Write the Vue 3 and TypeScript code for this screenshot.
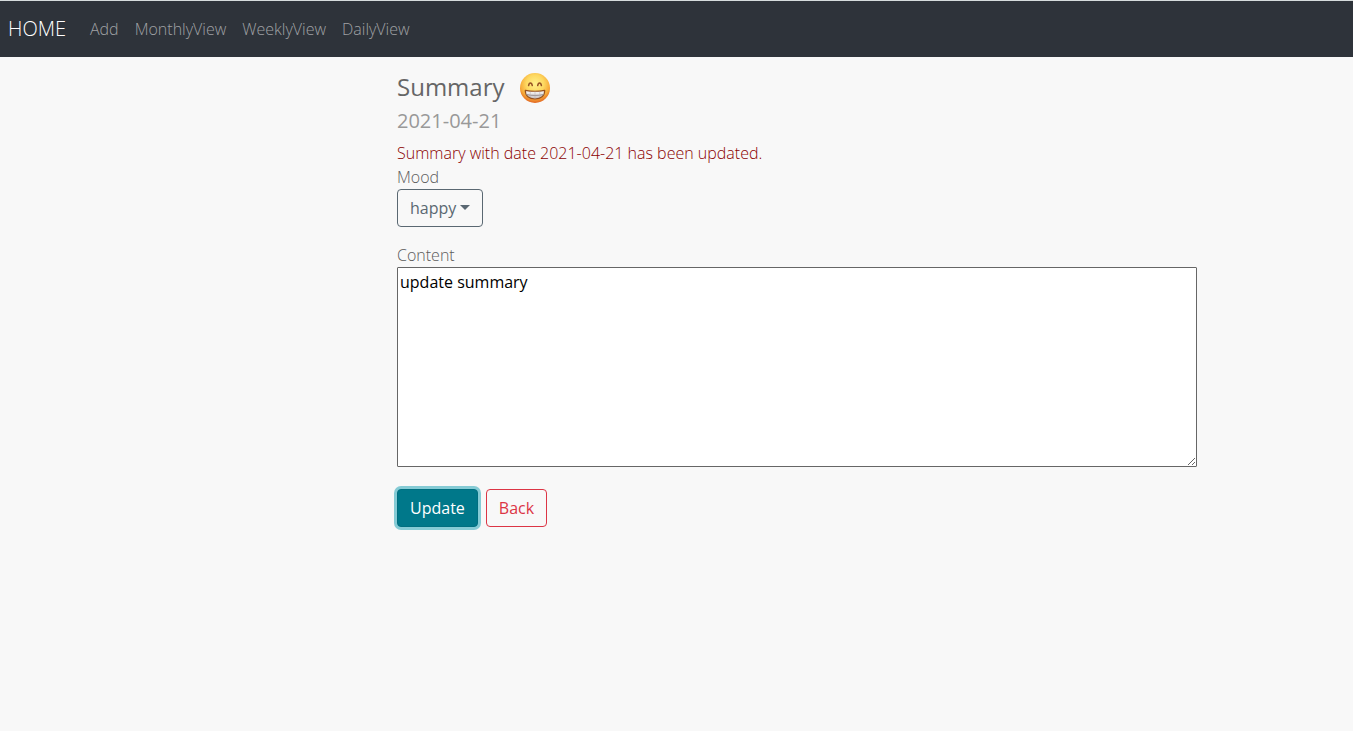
<script setup lang="ts">
import { ref } from 'vue'

const links: string[] = ['Add', 'MonthlyView', 'WeeklyView', 'DailyView']
const moods: string[] = ['happy']
const mood = ref('happy')
const content = ref('update summary')
const date = '2021-04-21'
</script>

<template>
  <nav class="navbar">
    <a class="brand" href="#">HOME</a>
    <a v-for="link in links" :key="link" class="nav-link" href="#">{{ link }}</a>
  </nav>
  <main class="page">
    <form class="summary" @submit.prevent>
      <div class="heading">
        <h4>Summary</h4>
        <svg class="emoji" viewBox="0 0 32 32" role="img" aria-label="happy face">
          <defs>
            <radialGradient id="face" cx="50%" cy="36%" r="65%">
              <stop offset="0" stop-color="#fff08a" />
              <stop offset="0.45" stop-color="#fdd860" />
              <stop offset="0.75" stop-color="#f7ab3a" />
              <stop offset="1" stop-color="#e0601f" />
            </radialGradient>
            <linearGradient id="teeth" x1="0" y1="0" x2="0" y2="1">
              <stop offset="0" stop-color="#ffffff" />
              <stop offset="1" stop-color="#c4bebe" />
            </linearGradient>
          </defs>
          <circle cx="16" cy="16" r="15" fill="url(#face)" />
          <path d="M9.6 13.6C10.2 10.2 12.6 10.2 13.3 13.6M18.7 13.6C19.4 10.2 21.8 10.2 22.4 13.6" fill="none" stroke="#965124" stroke-width="1.5" stroke-linecap="round" />
          <path d="M6.3 18.4C12 19.4 20 19.4 25.7 18.4C26 23.8 21.7 27 16 27S6 23.8 6.3 18.4Z" fill="url(#teeth)" stroke="#96501f" stroke-width="1.2" stroke-linejoin="round" />
          <path d="M7 22.5C12 23.7 20 23.7 25 22.5" fill="none" stroke="#8d8585" stroke-width="0.9" />
          <path d="M11.3 19.4V25.3M16 19.6V26.4M20.7 19.4V25.3" fill="none" stroke="#b5afaf" stroke-width="0.5" />
        </svg>
      </div>
      <h5>{{ date }}</h5>
      <p class="message" role="status">Summary with date {{ date }} has been updated.</p>
      <label for="mood">Mood</label>
      <div class="mood">
        <select id="mood" v-model="mood">
          <option v-for="m in moods" :key="m">{{ m }}</option>
        </select>
        <span class="caret" aria-hidden="true"></span>
      </div>
      <label for="content">Content</label>
      <textarea id="content" v-model="content"></textarea>
      <div class="actions">
        <button class="btn update" type="submit">Update</button>
        <button class="btn back" type="button">Back</button>
      </div>
    </form>
  </main>
</template>

<style>
body {
  background: #f8f8f8;
}
</style>

<style scoped>
.navbar,
.page {
  font-family: "Open Sans", sans-serif;
  font-size: 16px;
  font-weight: 300;
  line-height: 24px;
}
.navbar {
  display: flex;
  align-items: center;
  height: 56px;
  padding: 0 8px;
  border-top: 1px solid #d6dcdc;
  background: #2e333a;
}
.navbar a {
  text-decoration: none;
}
.brand {
  margin-right: 16px;
  color: #fff;
  font-size: 20px;
}
.nav-link {
  padding: 8px;
  color: #a0a2a5;
}
.page {
  display: grid;
  grid-template-columns: 397fr 800fr 156fr;
  padding: 15px 0 24px;
  color: #5c5c5c;
}
.summary {
  display: flex;
  flex-direction: column;
  grid-column: 2;
}
.heading {
  display: flex;
  align-items: flex-start;
  gap: 15px;
  margin-bottom: 5px;
}
h4,
h5,
p {
  margin: 0;
}
h4 {
  color: #666;
  font-size: 24px;
  font-weight: 500;
  line-height: 30px;
}
.emoji {
  width: 32px;
  height: 32px;
}
h5 {
  margin-bottom: 8px;
  color: #999;
  font-size: 20px;
  font-weight: 500;
  line-height: 24px;
}
.message {
  color: #8b0000;
}
.mood {
  display: grid;
  align-items: center;
  width: 86px;
  margin-bottom: 16px;
}
select,
.caret {
  grid-area: 1 / 1;
}
select {
  appearance: none;
  box-sizing: border-box;
  width: 100%;
  height: 38px;
  padding: 0 12px;
  border: 1px solid #5a6872;
  border-radius: 4px;
  background: transparent;
  color: #5a6872;
  font: 500 16px/24px "Open Sans", sans-serif;
}
.caret {
  justify-self: end;
  margin: 0 13px 2px 0;
  border: 5px solid transparent;
  border-top-color: #5a6872;
  border-bottom: 0;
  pointer-events: none;
}
textarea {
  box-sizing: border-box;
  width: 100%;
  height: 200px;
  margin: 0;
  padding: 2px;
  border: 1px solid #666;
  border-radius: 1px;
  background: #fff;
  color: #000;
  font: 500 16px/24px "Open Sans", sans-serif;
  resize: both;
}
.actions {
  display: flex;
  gap: 8px;
  margin-top: 22px;
}
.btn {
  padding: 6px 12px;
  border: 1px solid;
  border-radius: 4px;
  font: 500 16px/24px "Open Sans", sans-serif;
}
.update {
  border-color: #006f80;
  background: #00788a;
  box-shadow: 0 0 0 3px #85cbd5;
  color: #fff;
}
.back {
  border-color: #dc3545;
  background: transparent;
  color: #dc3545;
}
</style>
